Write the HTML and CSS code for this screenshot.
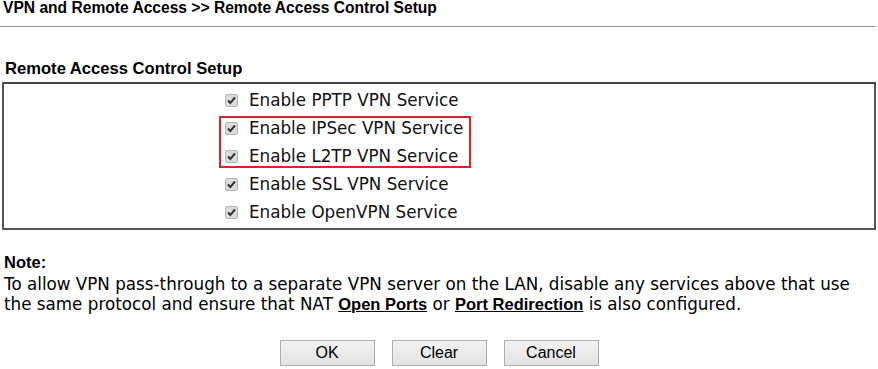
FILE: index.html
```html
<!DOCTYPE html>
<html lang="en">
<head>
    <meta charset="UTF-8">
    <title>Remote Access Control Setup</title>
    <link rel="stylesheet" href="styles.css">
</head>
<body>
    <div class="page-title">VPN and Remote Access &gt;&gt; Remote Access Control Setup</div>
    <hr class="title-line">

    <div class="section-title">Remote Access Control Setup</div>
    <div class="service-box">
        <label class="service-row">
            <span class="check"><svg width="13" height="13" viewBox="0 0 13 13"><path d="M3 6.5 L5.3 9 L10 3.5" fill="none" stroke="#333" stroke-width="2"/></svg></span>
            Enable PPTP VPN Service
        </label>
        <div class="highlight">
            <label class="service-row">
                <span class="check"><svg width="13" height="13" viewBox="0 0 13 13"><path d="M3 6.5 L5.3 9 L10 3.5" fill="none" stroke="#333" stroke-width="2"/></svg></span>
                Enable IPSec VPN Service
            </label>
            <label class="service-row">
                <span class="check"><svg width="13" height="13" viewBox="0 0 13 13"><path d="M3 6.5 L5.3 9 L10 3.5" fill="none" stroke="#333" stroke-width="2"/></svg></span>
                Enable L2TP VPN Service
            </label>
        </div>
        <label class="service-row">
            <span class="check"><svg width="13" height="13" viewBox="0 0 13 13"><path d="M3 6.5 L5.3 9 L10 3.5" fill="none" stroke="#333" stroke-width="2"/></svg></span>
            Enable SSL VPN Service
        </label>
        <label class="service-row">
            <span class="check"><svg width="13" height="13" viewBox="0 0 13 13"><path d="M3 6.5 L5.3 9 L10 3.5" fill="none" stroke="#333" stroke-width="2"/></svg></span>
            Enable OpenVPN Service
        </label>
    </div>

    <div class="note">
        <div class="note-title">Note:</div>
        <p>To allow VPN pass-through to a separate VPN server on the LAN, disable any services above that use<br>
        the same protocol and ensure that NAT <a href="#">Open Ports</a> or <a href="#">Port Redirection</a> is also configured.</p>
    </div>

    <div class="buttons">
        <button type="button" class="btn">OK</button>
        <button type="button" class="btn">Clear</button>
        <button type="button" class="btn">Cancel</button>
    </div>
</body>
</html>
```

FILE: styles.css
```css
* {
    margin: 0;
    padding: 0;
    box-sizing: border-box;
}

body {
    background: #fff;
    color: #000;
    font-family: "DejaVu Sans", Verdana, sans-serif;
    font-size: 16.75px;
    padding: 0 2px;
}

.page-title {
    font-family: "Liberation Sans", Arial, sans-serif;
    font-weight: bold;
    font-size: 15.6px;
    line-height: 15px;
    padding-left: 1px;
}

.title-line {
    border: none;
    border-top: 1px solid #999;
    margin: 11px 0 0 -2px;
    width: 876px;
}

.section-title {
    font-family: "Liberation Sans", Arial, sans-serif;
    font-weight: bold;
    font-size: 16.6px;
    line-height: 18px;
    margin-top: 33px;
    padding-left: 3px;
}

.service-box {
    border: 2px solid #555;
    border-top-color: #444;
    width: 874px;
    margin-top: 4px;
    padding: 2px 0;
    display: flex;
    flex-direction: column;
    align-items: flex-start;
    padding-left: 219px;
}

/* red marker drawn over the two rows */
.highlight {
    position: relative;
}

.highlight::after {
    content: '';
    position: absolute;
    top: 2px;
    bottom: 2px;
    left: -4px;
    width: 248px;
    border: 2px solid #e0202a;
}

.service-row {
    display: flex;
    align-items: center;
    height: 28px;
    padding-left: 2px;
    color: #111;
}

.check {
    display: inline-block;
    width: 13px;
    height: 13px;
    background: #dcdcdc;
    border: 1px solid #b5b5b5;
    border-radius: 2px;
    margin-right: 11px;
    line-height: 0;
}

.check svg {
    margin: -1px;
}

.note {
    margin-top: 22px;
    padding-left: 2px;
}

.note-title {
    font-family: "Liberation Sans", Arial, sans-serif;
    font-weight: bold;
    font-size: 16.5px;
    line-height: 20px;
}

.note p {
    line-height: 20px;
    margin-top: 2px;
}

.note a {
    color: #000;
    font-family: "Liberation Sans", Arial, sans-serif;
    font-weight: bold;
    font-size: 16.5px;
}

.buttons {
    display: flex;
    justify-content: center;
    gap: 17px;
    margin-top: 26px;
}

.btn {
    width: 95px;
    height: 26px;
    font-family: "Liberation Sans", Arial, sans-serif;
    font-size: 16px;
    color: #000;
    background: linear-gradient(#f2f2f2, #e2e2e2);
    border: 1px solid #adadad;
}
```
